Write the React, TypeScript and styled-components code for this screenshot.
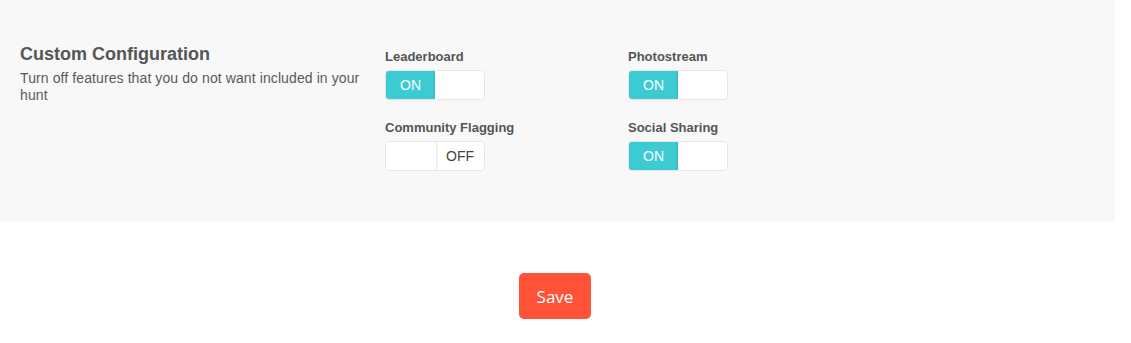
import { createGlobalStyle } from "styled-components";
import styled from "styled-components";

const GlobalStyle = createGlobalStyle`
  body {
    margin: 0;
    background: #ffffff;
    font-family: "Liberation Sans", Arial, sans-serif;
    color: #555555;
  }
`;

interface Feature {
  label: string;
  on: boolean;
}

const features: Feature[] = [
  { label: "Leaderboard", on: true },
  { label: "Photostream", on: true },
  { label: "Community Flagging", on: false },
  { label: "Social Sharing", on: true },
];

function Toggle({ on }: { on: boolean }) {
  return (
    <Switch>
      {on ? (
        <>
          <OnSide>ON</OnSide>
          <Thumb $side="right" />
        </>
      ) : (
        <>
          <Thumb $side="left" />
          <OffSide>OFF</OffSide>
        </>
      )}
    </Switch>
  );
}

export default function App() {
  return (
    <>
      <GlobalStyle />
      <Page>
        <Panel>
          <Intro>
            <Title>Custom Configuration</Title>
            <Subtitle>Turn off features that you do not want included in your hunt</Subtitle>
          </Intro>
          <Options>
            {features.map((f) => (
              <Option key={f.label}>
                <OptionLabel>{f.label}</OptionLabel>
                <Toggle on={f.on} />
              </Option>
            ))}
          </Options>
        </Panel>
        <Footer>
          <SaveButton>Save</SaveButton>
        </Footer>
      </Page>
    </>
  );
}

const Page = styled.div`
  width: 1115px;
`;
const Panel = styled.section`
  display: flex;
  background: #f8f8f8;
  padding: 44px 20px 51px 20px;
`;
const Intro = styled.div`
  width: 345px;
  margin-right: 20px;
`;
const Title = styled.h2`
  margin: 0 0 5px 0;
  font-size: 18px;
  line-height: 21px;
  font-weight: bold;
  color: #555555;
`;
const Subtitle = styled.p`
  margin: 0;
  font-size: 14px;
  line-height: 17px;
  letter-spacing: 0.1px;
  color: #5a5a5a;
`;
const Options = styled.div`
  display: grid;
  grid-template-columns: 243px 243px;
  row-gap: 20px;
  padding-top: 5px;
`;
const Option = styled.div`
  display: flex;
  flex-direction: column;
`;
const OptionLabel = styled.span`
  font-size: 13px;
  line-height: 16px;
  font-weight: bold;
  color: #555555;
  margin-bottom: 5px;
`;
const Switch = styled.div`
  display: flex;
  width: 100px;
  height: 30px;
  box-sizing: border-box;
  border: 1px solid #e6e6e6;
  border-radius: 4px;
  background: #ffffff;
  overflow: hidden;
`;
const OnSide = styled.span`
  display: flex;
  align-items: center;
  justify-content: center;
  width: 49px;
  background: #3dcbd3;
  color: #ffffff;
  font-size: 14px;
`;
const OffSide = styled.span`
  display: flex;
  align-items: center;
  justify-content: center;
  flex: 1;
  color: #444444;
  font-size: 14px;
`;
const Thumb = styled.span<{ $side: "left" | "right" }>`
  display: block;
  width: 50px;
  flex: ${(p) => (p.$side === "right" ? "1" : "none")};
  background: #ffffff;
  box-shadow: ${(p) =>
    p.$side === "left" ? "1px 0 2px rgba(0,0,0,0.12)" : "-1px 0 2px rgba(0,0,0,0.12)"};
`;
const Footer = styled.div`
  display: flex;
  justify-content: center;
  padding-top: 51px;
  padding-right: 5px;
`;
const SaveButton = styled.button`
  width: 72px;
  height: 46px;
  border: none;
  border-radius: 5px;
  background: #ff5238;
  color: #ffffff;
  font-family: "Open Sans", "Liberation Sans", sans-serif;
  font-size: 17px;
`;
